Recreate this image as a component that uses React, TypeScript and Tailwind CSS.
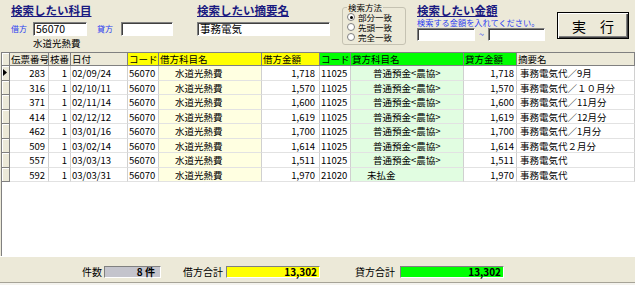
import React from 'react';

type Row = {
  no: string;
  eda: string;
  date: string;
  dCode: string;
  dName: string;
  dAmt: string;
  cCode: string;
  cName: string;
  cIndent: string;
  cAmt: string;
  memo: string;
};

const rows: Row[] = [
  { no: '283', eda: '1', date: '02/09/24', dCode: '56070', dName: '水道光熱費', dAmt: '1,718', cCode: '11025', cName: '普通預金<農協>', cIndent: 'pl-[22px]', cAmt: '1,718', memo: '事務電気代／9月' },
  { no: '316', eda: '1', date: '02/10/11', dCode: '56070', dName: '水道光熱費', dAmt: '1,570', cCode: '11025', cName: '普通預金<農協>', cIndent: 'pl-[22px]', cAmt: '1,570', memo: '事務電気代／１０月分' },
  { no: '371', eda: '1', date: '02/11/14', dCode: '56070', dName: '水道光熱費', dAmt: '1,600', cCode: '11025', cName: '普通預金<農協>', cIndent: 'pl-[22px]', cAmt: '1,600', memo: '事務電気代／11月分' },
  { no: '414', eda: '1', date: '02/12/12', dCode: '56070', dName: '水道光熱費', dAmt: '1,619', cCode: '11025', cName: '普通預金<農協>', cIndent: 'pl-[22px]', cAmt: '1,619', memo: '事務電気代／12月分' },
  { no: '462', eda: '1', date: '03/01/16', dCode: '56070', dName: '水道光熱費', dAmt: '1,700', cCode: '11025', cName: '普通預金<農協>', cIndent: 'pl-[22px]', cAmt: '1,700', memo: '事務電気代／1月分' },
  { no: '509', eda: '1', date: '03/02/14', dCode: '56070', dName: '水道光熱費', dAmt: '1,614', cCode: '11025', cName: '普通預金<農協>', cIndent: 'pl-[22px]', cAmt: '1,614', memo: '事務電気代２月分' },
  { no: '557', eda: '1', date: '03/03/13', dCode: '56070', dName: '水道光熱費', dAmt: '1,511', cCode: '11025', cName: '普通預金<農協>', cIndent: 'pl-[22px]', cAmt: '1,511', memo: '事務電気代' },
  { no: '592', eda: '1', date: '03/03/31', dCode: '56070', dName: '水道光熱費', dAmt: '1,970', cCode: '21020', cName: '未払金', cIndent: 'pl-[16px]', cAmt: '1,970', memo: '事務電気代' },
];

const cols = 'grid grid-cols-[8px_39px_22px_57px_31px_103px_58px_31px_113px_53px_1fr]';
const sunken = 'bg-white border border-t-[#808080] border-l-[#808080] border-b-white border-r-white shadow-[inset_1px_1px_0_#404040]';
const title = 'text-[11.5px] font-bold leading-[12px] text-[#1a1a80] underline underline-offset-[1px] whitespace-nowrap';
const hdr = 'h-[13px] border-r border-b border-[#808080] pl-[1px] leading-[13px] whitespace-nowrap overflow-hidden';
const cell = 'h-[14.5px] border-r border-b border-r-[#d0d0d0] border-b-[#e2e2e2] leading-[14px] whitespace-nowrap overflow-hidden';

function Radio({ label, checked }: { label: string; checked?: boolean }) {
  return (
    <div className="flex items-center h-[10px] gap-[3px]">
      <span className="w-[8px] h-[8px] rounded-full bg-white border border-[#808080] flex items-center justify-center">
        {checked && <span className="w-[3px] h-[3px] rounded-full bg-black" />}
      </span>
      <span className="text-[8.5px] leading-[10px]">{label}</span>
    </div>
  );
}

export default function App() {
  return (
    <div className="w-[635px] h-[285px] bg-[#ece9d8] flex flex-col overflow-hidden font-['Noto_Sans_CJK_JP',sans-serif] text-black">
      {/* search conditions */}
      <div className="h-[52px] flex items-start shrink-0">
        <div className="ml-[11px] w-[164px] pt-[4px] flex flex-col">
          <div className={title}>検索したい科目</div>
          <div className="mt-[6px] flex items-center h-[14px]">
            <span className="w-[22px] text-[8px] leading-[10px] text-[#2a3cf0]">借方</span>
            <div className={sunken + ' w-[54px] h-[14px] text-[10.5px] leading-[12px] pl-[2px]'}>56070</div>
            <span className="ml-[10px] w-[24px] text-[8px] leading-[10px] text-[#2a3cf0]">貸方</span>
            <div className={sunken + ' w-[52px] h-[14px]'} />
          </div>
          <div className="ml-[22px] mt-[2px] text-[9.5px] leading-[10px]">水道光熱費</div>
        </div>

        <div className="ml-[22px] w-[133px] pt-[4px] flex flex-col">
          <div className={title}>検索したい摘要名</div>
          <div className={sunken + ' mt-[6px] h-[14px] text-[10.5px] leading-[12px] pl-[2px]'}>事務電気</div>
        </div>

        <fieldset className="ml-[12px] mt-[3px] w-[64px] h-[42px] border border-[#c5c2b2] rounded-[3px] px-[4px] pb-[1px]">
          <legend className="text-[8.5px] leading-[9px] px-[1px]">検索方法</legend>
          <Radio label="部分一致" checked />
          <Radio label="先頭一致" />
          <Radio label="完全一致" />
        </fieldset>

        <div className="ml-[11px] w-[130px] pt-[4px] flex flex-col">
          <div className={title}>検索したい金額</div>
          <div className="mt-[1px] text-[8.2px] leading-[10px] text-[#2a3cf0] whitespace-nowrap">検索する金額を入れてください。</div>
          <div className="mt-[1px] flex items-center h-[13px]">
            <div className={sunken + ' w-[58px] h-[13px]'} />
            <span className="w-[13px] text-center text-[9px] leading-[10px] text-[#2a3cf0]">~</span>
            <div className={sunken + ' w-[57px] h-[13px]'} />
          </div>
        </div>

        <button className="ml-[10px] mt-[12px] w-[72px] h-[27px] border border-black bg-[#ece9d8] shadow-[inset_1px_1px_0_#fff,inset_-1px_-1px_0_#404040,inset_-2px_-2px_0_#808080] text-[14px] leading-[14px]">
          実　行
        </button>
      </div>

      {/* result grid */}
      <div className="flex-1 ml-[1px] bg-white border-l border-t border-[#808080] overflow-hidden text-[9.5px]">
        <div className={cols}>
          <div className="h-[13px] border-r border-b border-[#808080] bg-[#ece9d8] shadow-[inset_1px_1px_0_#fff]" />
          <div className={hdr + ' bg-[#ece9d8]'}>伝票番号</div>
          <div className={hdr + ' bg-[#ece9d8]'}>枝番</div>
          <div className={hdr + ' bg-[#ece9d8]'}>日付</div>
          <div className={hdr + ' bg-[#ffff00]'}>コード</div>
          <div className={hdr + ' bg-[#ffff00]'}>借方科目名</div>
          <div className={hdr + ' bg-[#ffff00]'}>借方金額</div>
          <div className={hdr + ' bg-[#00ff00]'}>コード</div>
          <div className={hdr + ' bg-[#00ff00]'}>貸方科目名</div>
          <div className={hdr + ' bg-[#00ff00]'}>貸方金額</div>
          <div className={hdr + ' bg-[#ece9d8]'}>摘要名</div>
        </div>
        {rows.map((r, i) => (
          <div key={r.no} className={cols}>
            <div className="h-[14.5px] border-r border-b border-[#808080] bg-[#ece9d8] shadow-[inset_1px_1px_0_#fff] flex items-center pl-[1px]">
              {i === 0 && (
                <svg width="4" height="7" viewBox="0 0 4 7">
                  <path d="M0 0 L4 3.5 L0 7 Z" fill="#000" />
                </svg>
              )}
            </div>
            <div className={cell + ' text-right pr-[3px]'}>{r.no}</div>
            <div className={cell + ' text-right pr-[3px]'}>{r.eda}</div>
            <div className={cell + ' pl-[1px]'}>{r.date}</div>
            <div className={cell + ' pl-[1px]'}>{r.dCode}</div>
            <div className={cell + ' bg-[#ffffe1] pl-[16px]'}>{r.dName}</div>
            <div className={cell + ' text-right pr-[4px]'}>{r.dAmt}</div>
            <div className={cell + ' pl-[1px]'}>{r.cCode}</div>
            <div className={cell + ' bg-[#e1fde1] ' + r.cIndent}>{r.cName}</div>
            <div className={cell + ' text-right pr-[2px]'}>{r.cAmt}</div>
            <div className={cell + ' pl-[3px]'}>{r.memo}</div>
          </div>
        ))}
      </div>

      {/* totals */}
      <div className="h-[29px] shrink-0 flex flex-col border-t border-white">
        <div className="mt-[9px] h-[12px] flex items-center text-[10px] leading-[12px]">
          <span className="ml-[82px] w-[22px]">件数</span>
          <div className="w-[57px] h-[12px] bg-[#c4c4cc] border border-t-[#808080] border-l-[#808080] border-b-white border-r-white text-right pr-[5px] font-bold leading-[10px]">8 件</div>
          <span className="ml-[22px] w-[43px]">借方合計</span>
          <div className="w-[94px] h-[12px] bg-[#ffff00] border border-t-[#808080] border-l-[#808080] border-b-white border-r-white text-right pr-[2px] font-bold leading-[10px]">13,302</div>
          <span className="ml-[35px] w-[45px]">貸方合計</span>
          <div className="w-[104px] h-[12px] bg-[#00ff00] border border-t-[#808080] border-l-[#808080] border-b-white border-r-white text-right pr-[2px] font-bold leading-[10px]">13,302</div>
        </div>
        <div className="mt-auto h-[3px] border-t border-[#a6a397] bg-[#f4f3ee]" />
      </div>
    </div>
  );
}
